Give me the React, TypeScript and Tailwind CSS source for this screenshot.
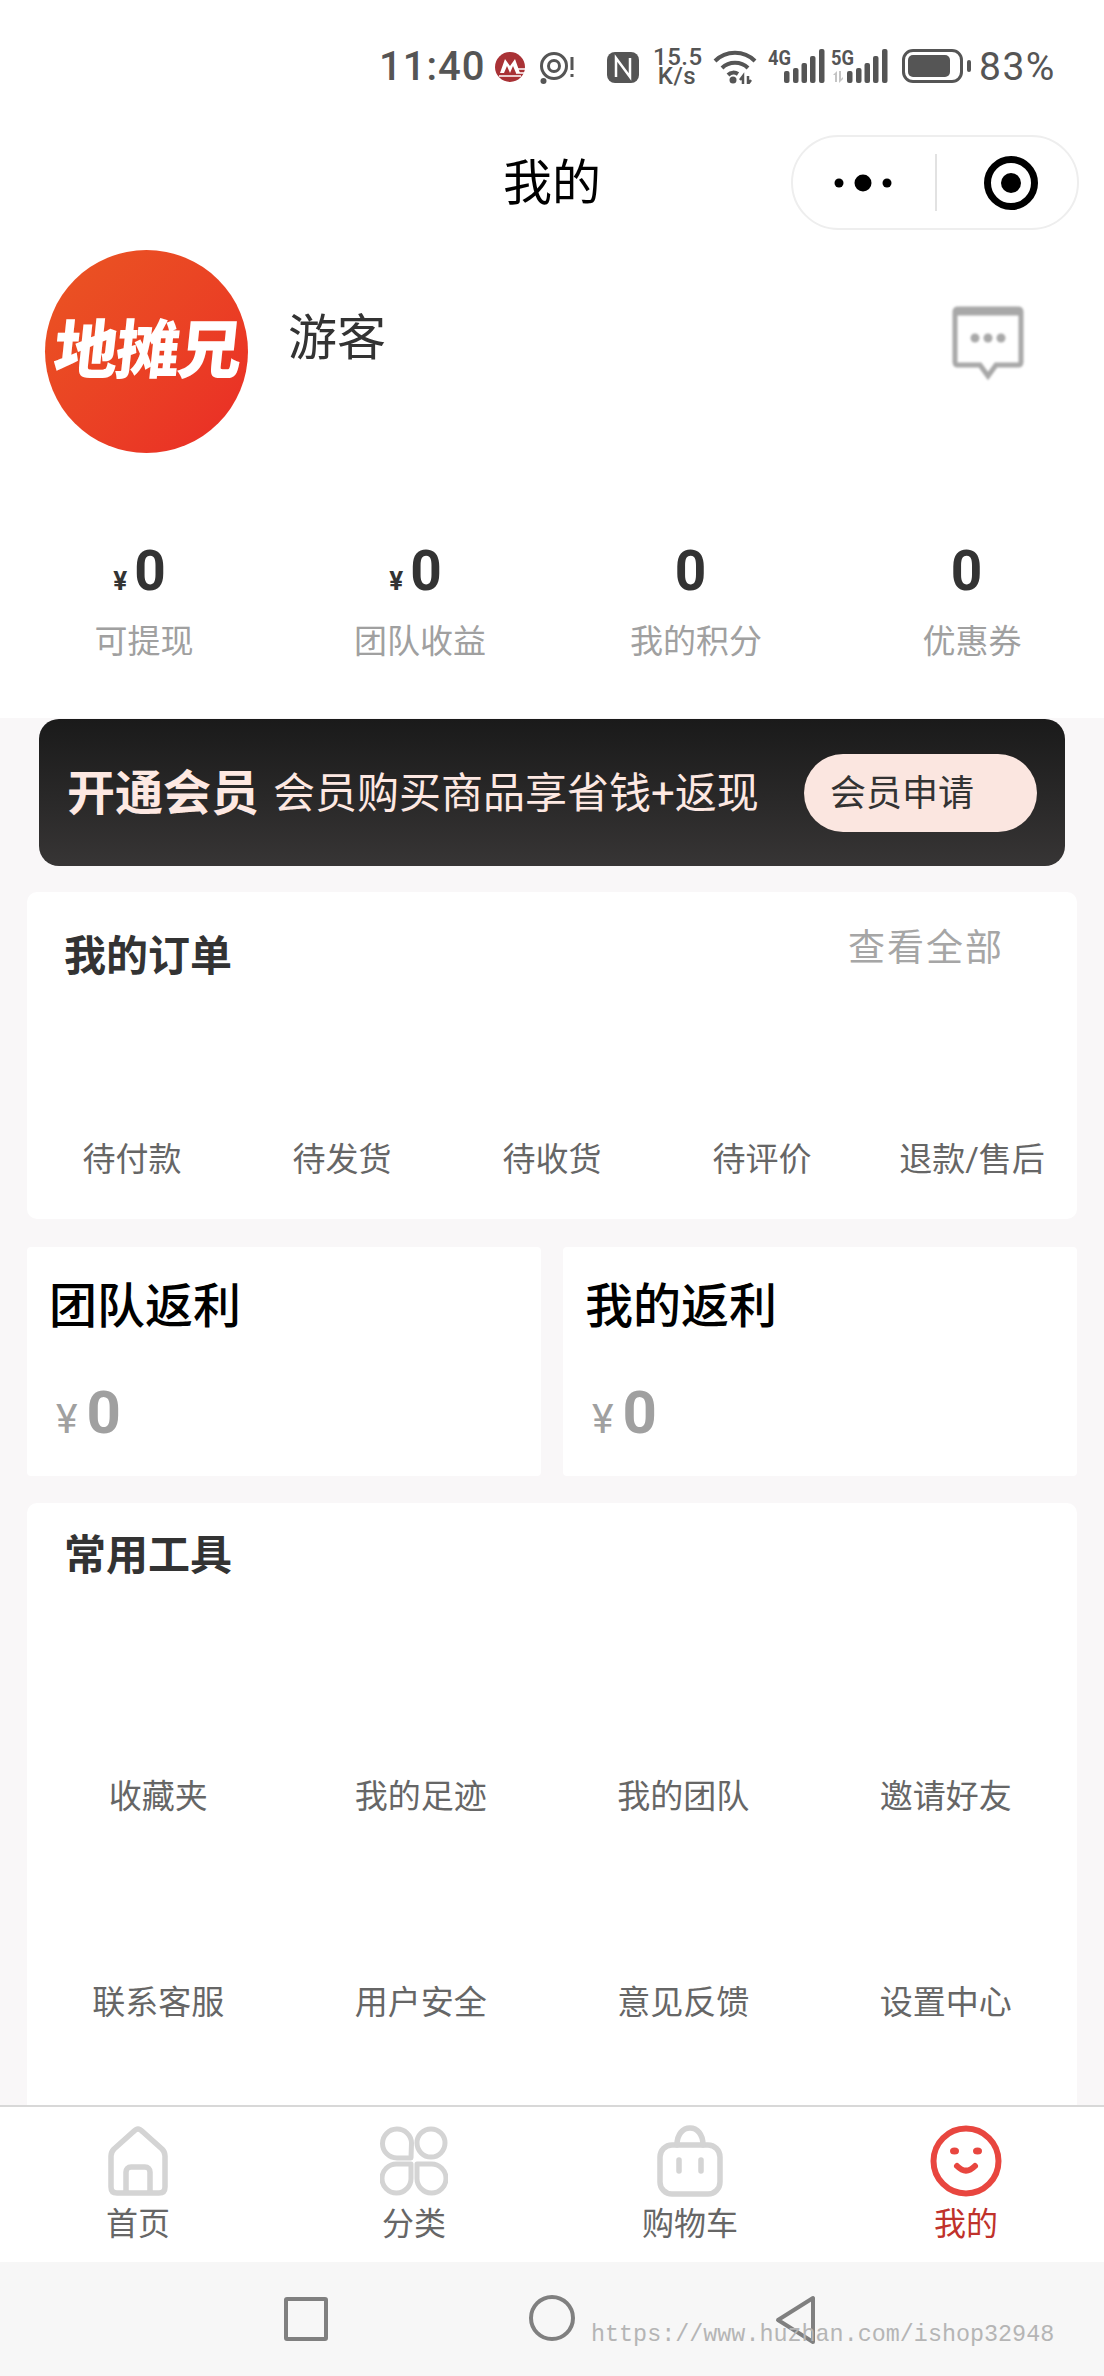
import type { ReactNode } from 'react';

const stats = [
  { value: '0', label: '可提现', money: true },
  { value: '0', label: '团队收益', money: true },
  { value: '0', label: '我的积分', money: false },
  { value: '0', label: '优惠券', money: false },
];

const orderItems = ['待付款', '待发货', '待收货', '待评价', '退款/售后'];
const tools = ['收藏夹', '我的足迹', '我的团队', '邀请好友', '联系客服', '用户安全', '意见反馈', '设置中心'];

function HomeIcon() {
  return (
    <svg width="60" height="70" viewBox="0 0 60 70" fill="none" stroke="#d4d4d4" strokeWidth="5.5" strokeLinejoin="round" className="blur-[0.7px]">
      <path d="M30 3 C28 3 27 4 25 6 L6 23 C4 25 3 27 3 30 V61 C3 65 5 67 9 67 H51 C55 67 57 65 57 61 V30 C57 27 56 25 54 23 L35 6 C33 4 32 3 30 3 Z" />
      <path d="M18 66 V46 C18 43 20 41 23 41 H37 C40 41 42 43 42 46 V66" />
    </svg>
  );
}

function CategoryIcon() {
  return (
    <svg width="68" height="70" viewBox="0 0 68 70" fill="none" stroke="#d4d4d4" strokeWidth="5" strokeLinejoin="round" className="blur-[0.7px]">
      <path d="M31 32 H17 A14.5 14.5 0 1 1 31.5 17 Z" />
      <circle cx="51" cy="17" r="14" />
      <path d="M31 38 V52 A14.5 14.5 0 1 1 17 38 Z" />
      <path d="M37 38 H51 A14.5 14.5 0 1 1 37 52 Z" />
    </svg>
  );
}

function CartIcon() {
  return (
    <svg width="66" height="72" viewBox="0 0 66 72" fill="none" stroke="#d4d4d4" strokeWidth="5.5" strokeLinecap="round" className="blur-[0.7px]">
      <rect x="3" y="20" width="60" height="49" rx="12" />
      <path d="M20 20 C20 9 26 3 33 3 C40 3 46 9 46 20" />
      <path d="M22 35 V46 M44 35 V46" />
    </svg>
  );
}

function SmileIcon() {
  return (
    <svg width="72" height="72" viewBox="0 0 72 72" fill="none" stroke="#e8463f" strokeWidth="6" strokeLinecap="round" className="blur-[0.4px]">
      <circle cx="36" cy="36" r="32.5" />
      <ellipse cx="24.5" cy="26" rx="4.5" ry="3.5" fill="#e8463f" stroke="none" />
      <ellipse cx="47.5" cy="26" rx="4.5" ry="3.5" fill="#e8463f" stroke="none" />
      <path d="M27 41 Q36 50 45 41" />
    </svg>
  );
}

const tabs: { label: string; icon: ReactNode; active?: boolean }[] = [
  { label: '首页', icon: <HomeIcon /> },
  { label: '分类', icon: <CategoryIcon /> },
  { label: '购物车', icon: <CartIcon /> },
  { label: '我的', icon: <SmileIcon />, active: true },
];

function Signal({ label, arrows }: { label: string; arrows?: boolean }) {
  return (
    <svg width="58" height="40" viewBox="0 0 58 40" fill="#555">
      <text x="0" y="19" fontSize="20" fontWeight="700" fontFamily="Roboto" textLength="23" lengthAdjust="spacingAndGlyphs">{label}</text>
      <g transform="translate(0,2)">
        {arrows && <path d="M2 27 L6 23 V34 H4 V27 Z M8 23 H10 V31 L12 29 V31 L8 35 Z" fill="#c4c4c4" />}
        <rect x="16" y="23" width="5.5" height="12" rx="2" />
        <rect x="25" y="20" width="5.5" height="15" rx="2" />
        <rect x="33.5" y="15" width="5.5" height="20" rx="2" />
        <rect x="42" y="8" width="5.5" height="27" rx="2" />
        <rect x="51" y="1" width="5.5" height="34" rx="2" />
      </g>
    </svg>
  );
}

function StatusBar() {
  return (
    <div className="h-[135px] flex items-start pt-[48px] pl-[379px] text-[#555]">
      <span className="text-[40px] leading-[38px] tracking-[1px] font-medium w-[116px]">11:40</span>
      <svg width="30" height="30" viewBox="0 0 30 30" className="mt-[4px]">
        <circle cx="15" cy="15" r="15" fill="#a93236" />
        <path d="M5 21 L10 7 L15 14 L20 7 L25 21 Z" fill="#fff" />
        <path d="M9 21 L12 14 L15 21 M15 21 L18 14 L21 21" fill="#a93236" />
        <path d="M21 17 H30 M21 21 H30 M4 24 H26" stroke="#fff" strokeWidth="1.5" />
      </svg>
      <svg width="37" height="36" viewBox="0 0 37 36" fill="none" stroke="#555" strokeWidth="3" className="mt-[4px] ml-[15px]">
        <circle cx="14" cy="14" r="12.5" />
        <circle cx="14" cy="14" r="5.5" />
        <circle cx="3.5" cy="29" r="3" fill="#555" stroke="none" />
        <path d="M32 5 V18 M32 22 V25" strokeWidth="3" />
      </svg>
      <svg width="32" height="31" viewBox="0 0 32 31" className="mt-[4px] ml-[30px]">
        <rect width="32" height="31" rx="8" fill="#555" />
        <path d="M9 25 V6 L23 25 V6" fill="none" stroke="#fff" strokeWidth="2.5" />
      </svg>
      <div className="ml-[14px] w-[48px] text-center text-[24px] leading-[19px] font-medium tracking-[0.5px]">
        15.5<br />K/s
      </div>
      <svg width="44" height="34" viewBox="0 0 44 34" fill="none" stroke="#555" strokeWidth="4" className="ml-[12px] mt-[2px]">
        <path d="M2 11 C13 0 31 0 42 11" />
        <path d="M9 18 C16 11 28 11 35 18" />
        <path d="M15 25 C18 22 22 22 25 24" />
        <circle cx="20" cy="30" r="3.5" fill="#555" stroke="none" />
        <path d="M27 30 L30 26 V34 M35 26 V34 L38 30" strokeWidth="2.5" />
      </svg>
      <div className="ml-[11px] -mt-[2px]"><Signal label="4G" /></div>
      <div className="ml-[5px] -mt-[2px]"><Signal label="5G" arrows /></div>
      <div className="ml-[13px] mt-[1px] w-[61px] h-[34px] rounded-[11px] border-[3px] border-[#555] pl-[3px] py-[3px] flex">
        <div className="w-[42px] rounded-[5px] bg-[#555]" />
      </div>
      <div className="ml-[4px] mt-[12px] w-[4px] h-[12px] rounded-full bg-[#555]" />
      <span className="ml-[8px] text-[39px] leading-[38px] tracking-[1.5px]">83%</span>
    </div>
  );
}

function Header() {
  return (
    <div className="h-[95px] grid grid-cols-[1fr_auto_1fr] items-center">
      <div />
      <div className="text-[49px] leading-[64px] text-black pt-[3px]">我的</div>
      <div className="flex justify-end pr-[25px]">
        <div className="w-[288px] h-[95px] rounded-full border-2 border-[#eeeeee] flex items-center">
          <svg width="60" height="20" viewBox="0 0 60 20" fill="#000" className="ml-[40px]">
            <circle cx="6" cy="10" r="4.5" />
            <circle cx="30" cy="10" r="8.5" />
            <circle cx="54" cy="10" r="4.5" />
          </svg>
          <div className="ml-[42px] w-[2px] h-[57px] bg-[#e2e2e2]" />
          <svg width="54" height="54" viewBox="0 0 54 54" className="ml-[47px]">
            <circle cx="27" cy="27" r="23.5" fill="none" stroke="#000" strokeWidth="7" />
            <circle cx="27" cy="27" r="10" fill="#000" />
          </svg>
        </div>
      </div>
    </div>
  );
}

function Profile() {
  return (
    <div className="mt-[20px] flex items-start">
      <div className="ml-[45px] w-[203px] h-[203px] rounded-full bg-gradient-to-br from-[#ea5522] to-[#ea2a26] flex items-center justify-center overflow-hidden">
        <span className="text-[64px] leading-none font-black text-white tracking-[-2px] -skew-x-6">地摊兄</span>
      </div>
      <div className="ml-[40px] mt-[57px] text-[49px] leading-[64px] text-[#333]">游客</div>
      <svg width="72" height="74" viewBox="0 0 72 74" fill="none" stroke="#a8a8a8" strokeWidth="5" className="ml-auto mr-[80px] mt-[56px] blur-[1px]">
        <path d="M6 3 H66 C68 3 69 4 69 6 V56 C69 58 68 59 66 59 H44 L36 70 L28 59 H6 C4 59 3 58 3 56 V6 C3 4 4 3 6 3 Z" />
        <path d="M3 6 H69" strokeWidth="7" />
        <circle cx="23" cy="32" r="4.5" fill="#a8a8a8" stroke="none" />
        <circle cx="36" cy="32" r="4.5" fill="#a8a8a8" stroke="none" />
        <circle cx="49" cy="32" r="4.5" fill="#a8a8a8" stroke="none" />
      </svg>
    </div>
  );
}

function Stats() {
  return (
    <div className="mt-[86px] pl-[6px] grid grid-cols-[repeat(4,276px)]">
      {stats.map((s) => (
        <div key={s.label} className="flex flex-col items-center">
          <div className={`h-[64px] ${s.money ? 'pr-[9px]' : 'pr-[11px]'} flex items-baseline leading-[64px] text-[#333] font-bold`}>
            {s.money && <span className="text-[26px] mr-[7px]">¥</span>}
            <span className="text-[55px]">{s.value}</span>
          </div>
          <div className="mt-[17px] text-[33px] leading-[44px] text-[#a0a0a0]">{s.label}</div>
        </div>
      ))}
    </div>
  );
}

function VipBanner() {
  return (
    <div className="mx-[39px] mt-[1px] h-[147px] rounded-[20px] bg-gradient-to-b from-[#1a1a1a] to-[#373535] flex items-center pl-[28px] pr-[28px] text-[#fde8e2]">
      <span className="pt-[3px] text-[48px] leading-[60px] font-bold">开通会员</span>
      <span className="pt-[3px] ml-[14px] text-[42px] leading-[60px]">会员购买商品享省钱+返现</span>
      <div className="ml-auto w-[233px] h-[78px] rounded-full bg-[#fbe6e0] pl-[26px] pt-[2px] flex items-center text-[36px] text-[#333]">会员申请</div>
    </div>
  );
}

function OrderCard() {
  return (
    <div className="mx-[27px] mt-[26px] h-[327px] rounded-[10px] bg-white flex flex-col">
      <div className="flex justify-between items-start">
        <div className="pl-[37px] pt-[37px] text-[42px] leading-[56px] font-bold text-[#333]">我的订单</div>
        <div className="pr-[73px] pt-[33px] text-[37px] leading-[48px] tracking-[2px] text-[#a6a6a6]">查看全部</div>
      </div>
      <div className="mt-auto pb-[37px] grid grid-cols-5">
        {orderItems.map((item) => (
          <div key={item} className="text-center text-[33px] leading-[44px] text-[#666]">{item}</div>
        ))}
      </div>
    </div>
  );
}

function RebateCard({ title }: { title: string }) {
  return (
    <div className="flex-1 h-[229px] rounded-[4px] bg-white pl-[22px] pt-[28px]">
      <div className="text-[48px] leading-[64px] font-medium text-black">{title}</div>
      <div className="mt-[39px] flex items-baseline leading-[70px] text-[#a0a0a0]">
        <span className="ml-[7px] text-[41px]">¥</span>
        <span className="ml-[9px] text-[60px] font-bold">0</span>
      </div>
    </div>
  );
}

function ToolsCard() {
  return (
    <div className="mx-[27px] mt-[27px] rounded-[10px] bg-white pb-[90px]">
      <div className="pl-[37px] pt-[25px] text-[42px] leading-[56px] font-bold text-[#333]">常用工具</div>
      <div className="mt-[29px] grid grid-cols-4">
        {tools.map((tool) => (
          <div key={tool} className="h-[206px] flex items-end justify-center text-[33px] leading-[44px] text-[#666]">{tool}</div>
        ))}
      </div>
    </div>
  );
}

function TabBar() {
  return (
    <div className="h-[157px] shrink-0 border-t-2 border-[#d8d8d8] bg-white grid grid-cols-[repeat(4,276px)]">
      {tabs.map((tab) => (
        <div key={tab.label} className="flex flex-col items-center pt-[17px]">
          <div className="h-[74px] flex items-center justify-center">{tab.icon}</div>
          <div className={`mt-[4px] text-[32px] leading-[44px] ${tab.active ? 'text-[#c0322b]' : 'text-[#666]'}`}>{tab.label}</div>
        </div>
      ))}
    </div>
  );
}

function NavBar() {
  return (
    <div className="relative h-[114px] shrink-0 bg-[#f7f7f7] flex items-start pt-[33px] pl-[284px]">
      <div className="mt-[2px] w-[44px] h-[44px] rounded-[3px] border-[4px] border-[#808080]" />
      <div className="ml-[201px] w-[46px] h-[46px] rounded-full border-[4px] border-[#808080]" />
      <svg width="42" height="50" viewBox="0 0 42 50" fill="none" stroke="#808080" strokeWidth="4" strokeLinejoin="round" className="ml-[200px]">
        <path d="M38 3 V47 L3 25 Z" />
      </svg>
      <span className="absolute left-[591px] top-[58px] font-['Liberation_Mono',monospace] text-[23.4px] leading-[30px] text-[#b5b5b5]">https://www.huzhan.com/ishop32948</span>
    </div>
  );
}

export default function App() {
  return (
    <div className="w-[1104px] h-[2376px] overflow-hidden flex flex-col bg-[#f9f7f8] font-['Roboto','Noto_Sans_CJK_SC',sans-serif]">
      <div className="flex-1 min-h-0 overflow-hidden">
        <div className="h-[718px] bg-white">
          <StatusBar />
          <Header />
          <Profile />
          <Stats />
        </div>
        <VipBanner />
        <OrderCard />
        <div className="mx-[27px] mt-[28px] flex gap-[22px]">
          <RebateCard title="团队返利" />
          <RebateCard title="我的返利" />
        </div>
        <ToolsCard />
      </div>
      <TabBar />
      <NavBar />
    </div>
  );
}
